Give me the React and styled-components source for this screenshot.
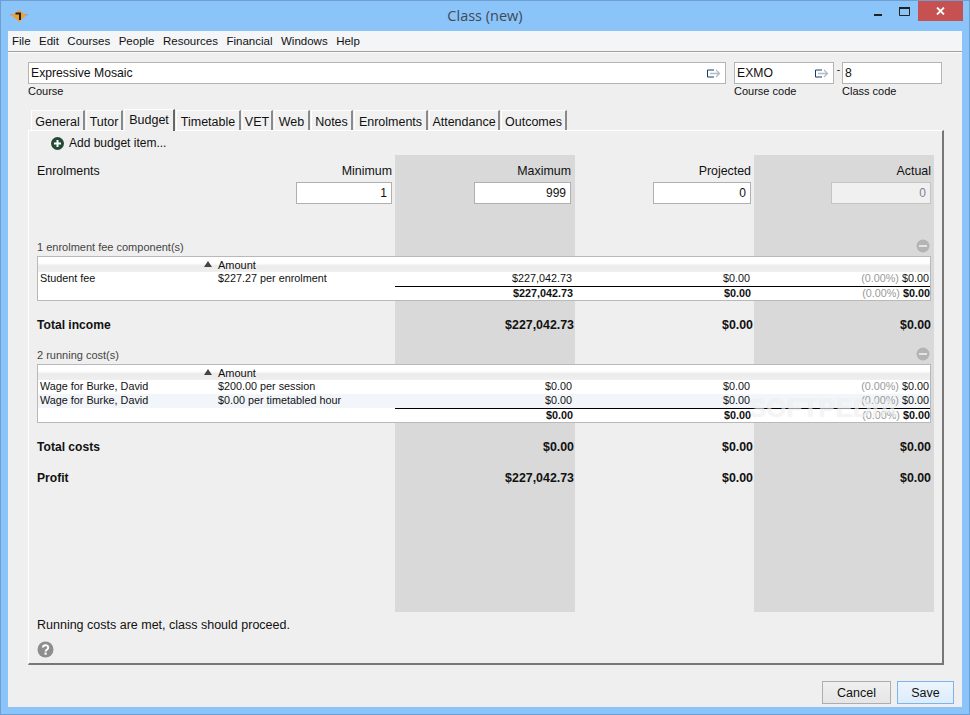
import React from 'react'
import styled, { createGlobalStyle } from 'styled-components'

const GlobalStyle = createGlobalStyle`
    html, body {
        margin: 0;
        padding: 0;
        background: #8ac4f9;
    }
    * {
        box-sizing: border-box;
    }
`

const Window = styled.div`
    width: 970px;
    height: 715px;
    display: flex;
    flex-direction: column;
    background: #8ac4f9;
    border: 1px solid #6f9fd0;
    font-family: "Liberation Sans", Arial, sans-serif;
    font-size: 12px;
    color: #111;
    overflow: hidden;
`

const TitleBar = styled.div`
    height: 30px;
    flex: none;
    display: flex;
    align-items: flex-start;
    justify-content: space-between;
    padding-left: 9px;
    position: relative;
`

const Title = styled.div`
    position: absolute;
    left: 0;
    right: 0;
    top: 6px;
    text-align: center;
    font-family: "Open Sans", sans-serif;
    font-size: 14.5px;
    line-height: 18px;
    color: #3f4a55;
`

const Logo = styled.svg`
    width: 18px;
    height: 14px;
    margin-top: 8px;
`

const Controls = styled.div`
    display: flex;
    align-items: flex-start;
    margin-right: 6px;
    height: 20px;
`

const ControlButton = styled.div`
    width: ${props => props.$close ? '45px' : '27px'};
    height: 20px;
    display: flex;
    align-items: center;
    justify-content: center;
    background: ${props => props.$close ? '#c75050' : 'transparent'};
`

const Client = styled.div`
    flex: 1;
    margin: 0 7px 7px 7px;
    background: #efefef;
    display: flex;
    flex-direction: column;
    min-height: 0;
`

const MenuBar = styled.div`
    height: 21px;
    flex: none;
    display: flex;
    align-items: center;
    gap: 8.5px;
    padding: 0 4px;
    background: #f4f5f7;
    border-bottom: 1px solid #a0a0a0;
    box-shadow: 0 1px 0 #fafafa;
    font-size: 11.5px;
`

const Body = styled.div`
    flex: 1;
    padding: 10px 0 0 20px;
    display: flex;
    flex-direction: column;
`

const FieldRow = styled.div`
    display: flex;
    align-items: flex-start;
    height: 47px;
    flex: none;
`

const Field = styled.div`
    width: ${props => props.$w}px;
    margin-left: ${props => props.$ml || 0}px;
    position: relative;
`

const Box = styled.div`
    height: 22px;
    display: flex;
    align-items: center;
    justify-content: space-between;
    padding: 0 3px 0 2px;
    background: #fff;
    border: 1px solid #b4b4b4;
    font-size: 12.2px;
`

const FieldLabel = styled.div`
    font-size: 11px;
    line-height: 13px;
    margin-top: 1px;
`

const Dash = styled.span`
    position: absolute;
    right: -6px;
    top: 2px;
    font-size: 10px;
    line-height: 12px;
`

const TabStrip = styled.div`
    display: flex;
    align-items: flex-end;
    height: 21px;
    flex: none;
    padding-left: 3px;
    position: relative;
    z-index: 1;
`

const Tab = styled.div`
    width: ${props => props.$w}px;
    height: ${props => props.$active ? '22px' : '20px'};
    margin-right: 1px;
    display: flex;
    align-items: center;
    justify-content: center;
    padding-top: ${props => props.$active ? '0' : '3px'};
    padding-bottom: ${props => props.$active ? '2px' : '0'};
    background: ${props => props.$active ? '#efefef' : '#f1f1f1'};
    border-top: 1px solid #fff;
    border-left: 1px solid #fff;
    border-right: 2px solid ${props => props.$active ? '#666' : '#8a8a8a'};
    margin-bottom: ${props => props.$active ? '-1px' : '0'};
    font-size: 12.5px;
    white-space: nowrap;
`

const Panel = styled.div`
    width: 916px;
    height: 535px;
    flex: none;
    display: flex;
    flex-direction: column;
    padding-left: 8px;
    border-top: 1px solid #fff;
    border-left: 1px solid #fff;
    border-right: 2px solid #777;
    border-bottom: 2px solid #777;
`

const AddRow = styled.div`
    height: 24px;
    flex: none;
    display: flex;
    align-items: center;
    gap: 5px;
    padding-left: 14px;
`

const Sheet = styled.div`
    width: 897px;
    height: 457px;
    flex: none;
    background:
        linear-gradient(#d9d9d9, #d9d9d9) 358px 0 / 180px 100% no-repeat,
        linear-gradient(#d9d9d9, #d9d9d9) 717px 0 / 180px 100% no-repeat;
    position: relative;
`

const Columns = styled.div`
    display: grid;
    grid-template-columns: 358px 180px 179px 180px;
    height: ${props => props.$h}px;
    align-items: center;
`

const HeadRow = styled(Columns)`
    padding-top: 5px;
    font-size: 12.4px;
`

const HeadCell = styled.div`
    display: flex;
    justify-content: ${props => props.$split ? 'space-between' : 'flex-end'};
    padding-right: ${props => props.$pr || 3}px;
`

const InputCell = styled.div`
    display: flex;
    justify-content: flex-end;
    padding-right: ${props => props.$pr || 3}px;
`

const NumberInput = styled.div`
    width: ${props => props.$w}px;
    height: 22px;
    padding: 0 4px;
    display: flex;
    align-items: center;
    justify-content: flex-end;
    background: ${props => props.$disabled ? '#f0f0f0' : '#fff'};
    border: 1px solid ${props => props.$disabled ? '#c4c4c4' : '#b0b0b0'};
    color: ${props => props.$disabled ? '#808090' : '#111'};
`

const SectionRow = styled.div`
    height: ${props => props.$h}px;
    display: flex;
    align-items: flex-end;
    justify-content: space-between;
    color: #444;
    font-size: 11px;
    line-height: 13px;
    padding: 0 4px 2px 0;
`

const MinusIcon = styled.svg`
    width: 14px;
    height: 14px;
    margin-bottom: 1px;
`

const Table = styled.div`
    width: 894px;
    background: #fff;
    border: 1px solid #b9b9b9;
    font-size: 10.8px;
`

const TableHead = styled.div`
    height: 15px;
    display: flex;
    align-items: center;
    padding-left: 166px;
    gap: 4px;
    font-size: 11px;
    background: linear-gradient(#fff 0, #fff 40%, #ebebeb 60%, #efefef 100%);
`

const SortArrow = styled.span`
    width: 0;
    height: 0;
    border-left: 4px solid transparent;
    border-right: 4px solid transparent;
    border-bottom: 6px solid #444;
    margin-bottom: 2px;
    margin-right: 2px;
`

const TableRow = styled.div`
    display: grid;
    grid-template-columns: 178px 179px 180px 179px 176px;
    height: 14px;
    line-height: 13px;
    background: ${props => props.$tint ? '#f2f5fa' : '#fff'};
    font-weight: ${props => props.$total ? 'bold' : 'normal'};
`

const Cell = styled.div`
    padding-left: 2px;
    white-space: nowrap;
`

const AmountCell = styled.div`
    text-align: right;
    padding-right: ${props => props.$pr}px;
    white-space: nowrap;
    border-top: ${props => props.$total ? '1px solid #000' : 'none'};
`

const Percent = styled.span`
    color: #999;
    font-weight: normal;
`

const Watermark = styled.div`
    position: absolute;
    left: 712px;
    top: 239px;
    font-size: 26px;
    line-height: 28px;
    font-weight: bold;
    color: rgba(255, 255, 255, 0.6);
    text-shadow: 0 0 1px rgba(0, 0, 0, 0.1);
    pointer-events: none;
`

const TotalLabel = styled.div`
    font-weight: bold;
    font-size: 12.1px;
`

const TotalAmount = styled.div`
    font-weight: bold;
    font-size: 12.4px;
    text-align: right;
    padding-right: ${props => props.$pr}px;
`

const StatusText = styled.div`
    height: 26px;
    flex: none;
    display: flex;
    align-items: center;
    font-size: 12.5px;
`

const HelpIcon = styled.svg`
    width: 17px;
    height: 17px;
    margin-top: 3px;
    flex: none;
`

const ButtonRow = styled.div`
    display: flex;
    justify-content: flex-end;
    gap: 6px;
    padding: 16px 8px 0 0;
`

const Button = styled.div`
    width: ${props => props.$w}px;
    height: 23px;
    display: flex;
    align-items: center;
    justify-content: center;
    font-size: 12.5px;
    border: 1px solid ${props => props.$primary ? '#7eb4ea' : '#adadad'};
    background: ${props => props.$primary ? 'linear-gradient(#ecf4fc, #dcecfc)' : 'linear-gradient(#f0f0f0, #e5e5e5)'};
`

const menus = ['File', 'Edit', 'Courses', 'People', 'Resources', 'Financial', 'Windows', 'Help']

const tabs = [
    ['General', 54], ['Tutor', 37], ['Budget', 51], ['Timetable', 65], ['VET', 31],
    ['Web', 36], ['Notes', 42], ['Enrolments', 74], ['Attendance', 71], ['Outcomes', 66],
]

const LinkArrow = () => (
    <svg width="15" height="9" viewBox="0 0 15 9">
        <path d="M7 1H.5v7H7" fill="none" stroke="#123f6e" />
        <path d="M3 4.500h9M9 1l3.500 3.500L9 8" fill="none" stroke="#b4bcc6" strokeWidth="1.3" />
    </svg>
)

const Minus = () => (
    <MinusIcon viewBox="0 0 14 14">
        <circle cx="7" cy="7" r="6.500" fill="#b4b4b4" />
        <rect x="3" y="6" width="8" height="2" fill="#e4e4e4" />
    </MinusIcon>
)

const Money = () => (
    <>
        <Percent>(0.00%)</Percent> $0.00
    </>
)

const ItemRow = ({ name, rate, max, tint }) => (
    <TableRow $tint={tint}>
        <Cell>{name}</Cell>
        <Cell>{rate}</Cell>
        <AmountCell $pr={3}>{max}</AmountCell>
        <AmountCell $pr={4}>$0.00</AmountCell>
        <AmountCell $pr={1}><Money /></AmountCell>
    </TableRow>
)

const SumRow = ({ max }) => (
    <TableRow $total>
        <Cell />
        <Cell />
        <AmountCell $total $pr={2}>{max}</AmountCell>
        <AmountCell $total $pr={3}>$0.00</AmountCell>
        <AmountCell $total $pr={0}><Money /></AmountCell>
    </TableRow>
)

const TotalRow = ({ label, h, max }) => (
    <Columns $h={h}>
        <TotalLabel>{label}</TotalLabel>
        <TotalAmount $pr={1}>{max}</TotalAmount>
        <TotalAmount $pr={1}>$0.00</TotalAmount>
        <TotalAmount $pr={3}>$0.00</TotalAmount>
    </Columns>
)

const BudgetTable = ({ children }) => (
    <Table>
        <TableHead>
            <SortArrow />
            Amount
        </TableHead>
        {children}
    </Table>
)

const App = () => {
    return (
        <Window>
            <GlobalStyle />
            <TitleBar>
                <Logo viewBox="0 0 18 14">
                    <path d="M0 5h18v1.500H0z" fill="#a9a49a" />
                    <path d="M9 1l7 5.500L9 13 2 6.500z" fill="#f0a030" />
                    <path d="M5.500 3.500H11V11H9V5.500H5.500z" fill="#222" />
                </Logo>
                <Title>Class (new)</Title>
                <Controls>
                    <ControlButton>
                        <svg width="10" height="10" viewBox="0 0 10 10"><rect x="1" y="8" width="8" height="2" fill="#222" /></svg>
                    </ControlButton>
                    <ControlButton>
                        <svg width="12" height="10" viewBox="0 0 12 10"><path d="M.5 2.500h10v7H.5z" fill="none" stroke="#222" /><rect y="1" width="11" height="2" fill="#222" /></svg>
                    </ControlButton>
                    <ControlButton $close>
                        <svg width="9" height="8" viewBox="0 0 9 8"><path d="M1 .5l7 7M8 .5l-7 7" stroke="#fff" strokeWidth="1.8" /></svg>
                    </ControlButton>
                </Controls>
            </TitleBar>
            <Client>
                <MenuBar>
                    {menus.map(m => <span key={m}>{m}</span>)}
                </MenuBar>
                <Body>
                    <FieldRow>
                        <Field $w={698}>
                            <Box>Expressive Mosaic<LinkArrow /></Box>
                            <FieldLabel>Course</FieldLabel>
                        </Field>
                        <Field $w={100} $ml={8}>
                            <Box>EXMO<LinkArrow /></Box>
                            <FieldLabel>Course code</FieldLabel>
                            <Dash>-</Dash>
                        </Field>
                        <Field $w={100} $ml={8}>
                            <Box>8</Box>
                            <FieldLabel>Class code</FieldLabel>
                        </Field>
                    </FieldRow>
                    <TabStrip>
                        {tabs.map(([name, w]) => (
                            <Tab key={name} $w={w} $active={name === 'Budget'}>{name}</Tab>
                        ))}
                    </TabStrip>
                    <Panel>
                        <AddRow>
                            <svg width="13" height="13" viewBox="0 0 13 13">
                                <circle cx="6.500" cy="6.500" r="6.500" fill="#234a32" />
                                <path d="M5.500 3h2v2.500H10v2H7.500V10h-2V7.500H3v-2h2.500z" fill="#fff" />
                            </svg>
                            Add budget item...
                        </AddRow>
                        <Sheet>
                            <HeadRow $h={27}>
                                <HeadCell $split><span>Enrolments</span><span>Minimum</span></HeadCell>
                                <HeadCell $pr={4}>Maximum</HeadCell>
                                <HeadCell>Projected</HeadCell>
                                <HeadCell>Actual</HeadCell>
                            </HeadRow>
                            <Columns $h={22}>
                                <InputCell><NumberInput $w={96}>1</NumberInput></InputCell>
                                <InputCell $pr={4}><NumberInput $w={97}>999</NumberInput></InputCell>
                                <InputCell><NumberInput $w={98}>0</NumberInput></InputCell>
                                <InputCell><NumberInput $w={100} $disabled>0</NumberInput></InputCell>
                            </Columns>
                            <SectionRow $h={52}>
                                <span>1 enrolment fee component(s)</span>
                                <Minus />
                            </SectionRow>
                            <BudgetTable>
                                <ItemRow name="Student fee" rate="$227.27 per enrolment" max="$227,042.73" />
                                <SumRow max="$227,042.73" />
                            </BudgetTable>
                            <TotalRow label="Total income" h={48} max="$227,042.73" />
                            <SectionRow $h={15}>
                                <span>2 running cost(s)</span>
                                <Minus />
                            </SectionRow>
                            <BudgetTable>
                                <ItemRow name="Wage for Burke, David" rate="$200.00 per session" max="$0.00" />
                                <ItemRow name="Wage for Burke, David" rate="$0.00 per timetabled hour" max="$0.00" tint />
                                <SumRow max="$0.00" />
                            </BudgetTable>
                            <TotalRow label="Total costs" h={48} max="$0.00" />
                            <TotalRow label="Profit" h={14} max="$227,042.73" />
                            <Watermark>SOFTPEDIA</Watermark>
                        </Sheet>
                        <StatusText>Running costs are met, class should proceed.</StatusText>
                        <HelpIcon viewBox="0 0 17 17">
                            <circle cx="8.500" cy="8.500" r="8" fill="#8e8e8e" />
                            <path d="M5.800 6.500a2.700 2.400 0 1 1 4.300 2c-1 .7-1.500 1-1.500 2" fill="none" stroke="#fff" strokeWidth="2" />
                            <rect x="7.500" y="11.500" width="2.200" height="2.200" fill="#fff" />
                        </HelpIcon>
                    </Panel>
                    <ButtonRow>
                        <Button $w={69}>Cancel</Button>
                        <Button $w={57} $primary>Save</Button>
                    </ButtonRow>
                </Body>
            </Client>
        </Window>
    )
}

export default App
